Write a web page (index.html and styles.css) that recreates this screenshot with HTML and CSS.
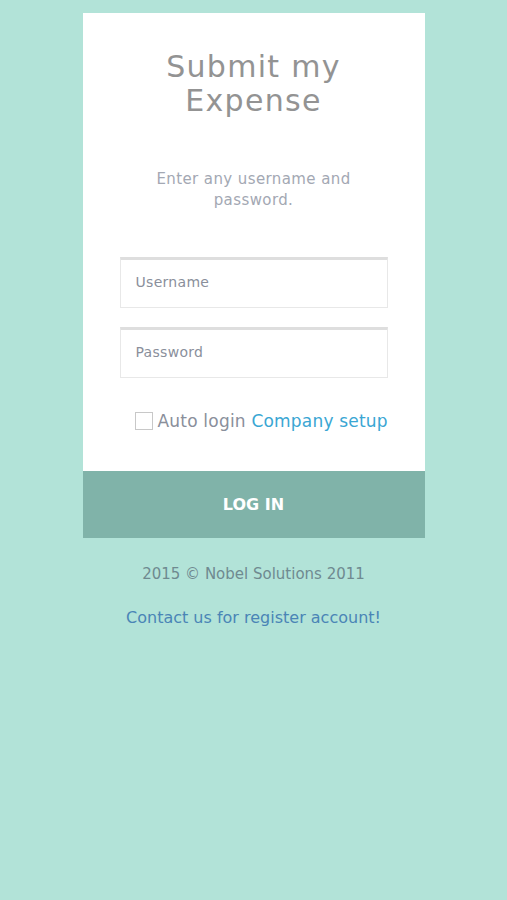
FILE: index.html
```html
<!DOCTYPE html>
<html>
<head>
<meta charset="utf-8">
<link rel="stylesheet" href="styles.css">
</head>
<body>
<div class="page">
  <div class="card">
    <div class="card-body">
      <h1 class="title">Submit my<br>Expense</h1>
      <p class="hint">Enter any username and<br>password.</p>
      <div class="field"><span class="placeholder">Username</span></div>
      <div class="field"><span class="placeholder">Password</span></div>
      <div class="options">
        <span class="checkbox"></span>
        <span class="label"><span class="auto">Auto login</span> <a class="setup">Company setup</a></span>
      </div>
    </div>
    <div class="login">LOG IN</div>
  </div>
  <p class="copy">2015 © Nobel Solutions 2011</p>
  <p class="contact">Contact us for register account!</p>
</div>
</body>
</html>
```
FILE: styles.css
```css
html, body {
  margin: 0;
  padding: 0;
  background: #b2e3d8;
  font-family: "DejaVu Sans", sans-serif;
}
.page {
  display: flex;
  flex-direction: column;
  align-items: center;
  padding-top: 13px;
}
.card {
  width: 342px;
  background: #ffffff;
}
.card-body {
  padding: 37px 37px 40px;
  display: flex;
  flex-direction: column;
}
.title {
  margin: 0;
  text-align: center;
  font-weight: normal;
  font-size: 30px;
  line-height: 34px;
  letter-spacing: 1.3px;
  color: #939393;
}
.hint {
  margin: 51px 0 0;
  text-align: center;
  font-size: 15px;
  line-height: 21px;
  letter-spacing: 0.4px;
  color: #a3a8b3;
}
.field {
  margin-top: 46px;
  height: 47px;
  border: 1px solid #e8e8e8;
  border-top: 3px solid #dedede;
  display: flex;
  align-items: center;
  padding: 0 0 3px 15px;
  box-sizing: content-box;
}
.field + .field {
  margin-top: 19px;
}
.field {
  height: 44px;
}
.placeholder {
  font-size: 14px;
  letter-spacing: 0.3px;
  color: #8a8f9b;
}
.options {
  margin-top: 33px;
  padding-left: 15px;
  display: flex;
  align-items: center;
  gap: 5px;
  font-size: 17px;
  line-height: 20px;
  white-space: nowrap;
}
.checkbox {
  flex: none;
  width: 16px;
  height: 16px;
  border: 1px solid #c8c8c8;
  background: #fff;
}
.label {
  letter-spacing: 0.2px;
}
.auto {
  color: #8a8f9b;
}
.setup {
  color: #3aa6d3;
}
.login {
  height: 67px;
  background: #80b3a9;
  color: #ffffff;
  font-weight: bold;
  font-size: 16px;
  display: flex;
  align-items: center;
  justify-content: center;
}
.copy {
  margin: 27px 0 0;
  font-size: 15px;
  color: #6f8a90;
}
.contact {
  margin: 25px 0 0;
  font-size: 16px;
  color: #4a85b6;
}
```
